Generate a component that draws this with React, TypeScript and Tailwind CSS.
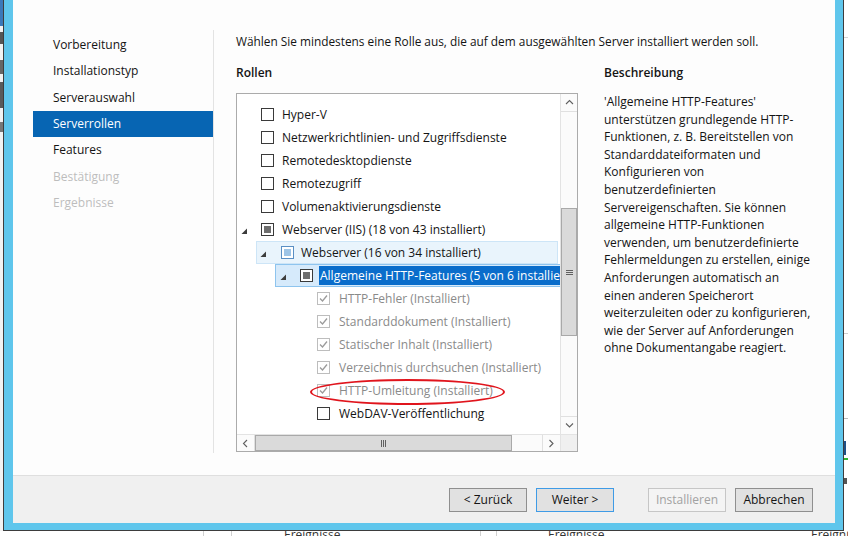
import React from "react";

// Server-Manager "Rollen und Features hinzufügen" wizard, step "Serverrollen".

const navItems = [
  { label: "Vorbereitung", state: "done" },
  { label: "Installationstyp", state: "done" },
  { label: "Serverauswahl", state: "done" },
  { label: "Serverrollen", state: "active" },
  { label: "Features", state: "done" },
  { label: "Bestätigung", state: "off" },
  { label: "Ergebnisse", state: "off" },
];

const description = [
  "'Allgemeine HTTP-Features'",
  "unterstützen grundlegende HTTP-",
  "Funktionen, z. B. Bereitstellen von",
  "Standarddateiformaten und",
  "Konfigurieren von",
  "benutzerdefinierten",
  "Servereigenschaften. Sie können",
  "allgemeine HTTP-Funktionen",
  "verwenden, um benutzerdefinierte",
  "Fehlermeldungen zu erstellen, einige",
  "Anforderungen automatisch an",
  "einen anderen Speicherort",
  "weiterzuleiten oder zu konfigurieren,",
  "wie der Server auf Anforderungen",
  "ohne Dokumentangabe reagiert.",
];

const topRoles = [
  "Hyper-V",
  "Netzwerkrichtlinien- und Zugriffsdienste",
  "Remotedesktopdienste",
  "Remotezugriff",
  "Volumenaktivierungsdienste",
];

const installed = [
  "HTTP-Fehler (Installiert)",
  "Standarddokument (Installiert)",
  "Statischer Inhalt (Installiert)",
  "Verzeichnis durchsuchen (Installiert)",
  "HTTP-Umleitung (Installiert)",
];

function Expander() {
  return (
    <svg width="7" height="7" viewBox="0 0 7 7" className="mt-[3px] shrink-0">
      <polygon points="6,0.5 6,6 0.5,6" fill="#3c3c3c" />
    </svg>
  );
}

function Box({ kind }: { kind: "empty" | "partial" | "partialBlue" | "checkedOff" }) {
  if (kind === "checkedOff") {
    return (
      <span className="flex h-[13px] w-[13px] shrink-0 items-center justify-center border border-[#bdbdbd] bg-white">
        <svg width="11" height="11" viewBox="0 0 11 11">
          <polyline points="2,5.5 4.5,8 9,2.5" fill="none" stroke="#9b9b9b" strokeWidth="1.3" />
        </svg>
      </span>
    );
  }
  if (kind === "partial") {
    return (
      <span className="flex h-[13px] w-[13px] shrink-0 items-center justify-center border border-[#3a3a3a] bg-white">
        <span className="h-[7px] w-[7px] bg-[#6e6e6e]" />
      </span>
    );
  }
  if (kind === "partialBlue") {
    return (
      <span className="flex h-[13px] w-[13px] shrink-0 items-center justify-center border border-[#5a8fc4] bg-white">
        <span className="h-[7px] w-[7px] bg-[#9dc4e6]" />
      </span>
    );
  }
  return <span className="h-[13px] w-[13px] shrink-0 border border-[#3a3a3a] bg-white" />;
}

function Chevron({ dir }: { dir: "up" | "down" | "left" | "right" }) {
  const pts = {
    up: "1,5 4.5,1.5 8,5",
    down: "1,1.5 4.5,5 8,1.5",
    left: "5,1 1.5,4.5 5,8",
    right: "1.5,1 5,4.5 1.5,8",
  }[dir];
  const vertical = dir === "up" || dir === "down";
  return (
    <svg width={vertical ? 9 : 7} height={vertical ? 7 : 9} viewBox={vertical ? "0 0 9 7" : "0 0 7 9"}>
      <polyline points={pts} fill="none" stroke="#606060" strokeWidth="1.1" />
    </svg>
  );
}

function RoleTree() {
  return (
    <div className="flex h-[359px] w-[342px] flex-col border border-[#ababab] bg-white">
      <div className="flex h-[340px]">
        <div className="relative w-[323px] overflow-hidden pt-[9px] whitespace-nowrap">
          {topRoles.map((r) => (
            <div key={r} className="flex h-[23px] items-center pl-[24px]">
              <Box kind="empty" />
              <span className="ml-[8px]">{r}</span>
            </div>
          ))}
          <div className="flex h-[23px] items-center pl-[4px]">
            <Expander />
            <span className="ml-[13px] flex">
              <Box kind="partial" />
            </span>
            <span className="ml-[8px]">Webserver (IIS) (18 von 43 installiert)</span>
          </div>
          <div className="ml-[19px] flex h-[23px] w-[302px] items-center border border-[#cde5f7] bg-[#e9f4fc] pl-[3px]">
            <Expander />
            <span className="ml-[14px] flex">
              <Box kind="partialBlue" />
            </span>
            <span className="ml-[7px]">Webserver (16 von 34 installiert)</span>
          </div>
          <div className="ml-[38px] flex h-[23px] w-[320px] items-center border border-[#8ec4ee] bg-[#d6eafb] pl-[4px]">
            <Expander />
            <span className="ml-[13px] flex">
              <Box kind="partial" />
            </span>
            <span className="ml-[6px] bg-[#0a6dcb] px-[1px] leading-[19px] text-white">
              Allgemeine HTTP-Features (5 von 6 installiert)
            </span>
          </div>
          {installed.map((r) => (
            <div key={r} className="flex h-[23px] items-center pl-[80px]">
              <Box kind="checkedOff" />
              <span className="ml-[9px] text-[#8a8a8a]">{r}</span>
            </div>
          ))}
          <div className="flex h-[23px] items-center pl-[80px]">
            <Box kind="empty" />
            <span className="ml-[9px]">WebDAV-Veröffentlichung</span>
          </div>
          <div className="absolute left-[73px] top-[285px] h-[26px] w-[195px] rounded-[50%] border-2 border-[#e0141c]" />
        </div>
        {/* vertical scrollbar */}
        <div className="flex w-[17px] flex-col border-l border-[#e3e3e3] bg-[#fbfbfb]">
          <div className="flex h-[18px] items-center justify-center border-b border-[#e0e0e0]">
            <Chevron dir="up" />
          </div>
          <div className="h-[96px]" />
          <div className="flex h-[128px] items-center justify-center border border-[#a9a9a9] bg-[#dadada]">
            <div className="flex flex-col gap-[1px]">
              <span className="h-[1px] w-[7px] bg-[#606060]" />
              <span className="h-[1px] w-[7px] bg-[#606060]" />
              <span className="h-[1px] w-[7px] bg-[#606060]" />
            </div>
          </div>
          <div className="flex-1" />
          <div className="flex h-[18px] items-center justify-center border-t border-[#e0e0e0]">
            <Chevron dir="down" />
          </div>
        </div>
      </div>
      {/* horizontal scrollbar */}
      <div className="flex h-[17px] border-t border-[#e3e3e3] bg-[#fbfbfb]">
        <div className="flex w-[18px] items-center justify-center border-r border-[#e0e0e0]">
          <Chevron dir="left" />
        </div>
        <div className="flex w-[257px] items-center justify-center border border-[#a9a9a9] bg-[#dadada]">
          <div className="flex gap-[1px]">
            <span className="h-[7px] w-[1px] bg-[#606060]" />
            <span className="h-[7px] w-[1px] bg-[#606060]" />
            <span className="h-[7px] w-[1px] bg-[#606060]" />
          </div>
        </div>
        <div className="flex-1" />
        <div className="flex w-[18px] items-center justify-center border-l border-[#e0e0e0]">
          <Chevron dir="right" />
        </div>
        <div className="w-[17px] border-l border-[#e3e3e3] bg-[#f0f0f0]" />
      </div>
    </div>
  );
}

function WizardButton({ children, variant }: { children: React.ReactNode; variant: "normal" | "default" | "disabled" }) {
  const styles = {
    normal: "border-[#8f8f8f] bg-[#e1e1e1] text-[#141414]",
    default: "border-[#3f9be6] bg-[#e1e1e1] text-[#141414]",
    disabled: "border-[#c6c6c6] bg-[#f4f4f4] text-[#a2a2a2]",
  }[variant];
  return (
    <button className={`flex h-[24px] w-[78px] items-center justify-center border text-[12px] ${styles}`}>
      {children}
    </button>
  );
}

export default function App() {
  return (
    <div className="flex h-[536px] w-[848px] flex-col overflow-hidden bg-white font-['Open_Sans',sans-serif] text-[12px] text-[#141414]">
      <div className="flex h-[531px]">
        {/* desktop behind, left */}
        <div className="flex w-[3px] flex-col bg-[#f2f2f2]">
          <div className="h-[26px] bg-[#3b78b8]" />
          <div className="h-[6px]" />
          <div className="h-[12px] bg-[#555]" />
          <div className="h-[16px]" />
          <div className="h-[14px] bg-[#666]" />
          <div className="h-[8px]" />
          <div className="h-[26px] bg-[#5a5a5a]" />
          <div className="h-[14px]" />
          <div className="h-[10px] bg-[#777]" />
        </div>
        {/* window */}
        <div className="w-[841px] border-x border-b border-[#3d3d3d]">
          <div className="flex h-full flex-col border-b-[7px] border-l-[9px] border-r-[8px] border-[#5fc6ec]">
            <div className="flex h-[475px] bg-[#fdfdfd]">
              <div className="w-[201px]">
                <div className="ml-[20px] mt-[30px] h-[423px] border-r border-[#e3e3e3] pt-[2px]">
                  {navItems.map((n) => (
                    <div
                      key={n.label}
                      className={`flex h-[26.3px] items-center pl-[20px] ${
                        n.state === "active"
                          ? "bg-[#0765b3] text-white"
                          : n.state === "off"
                          ? "text-[#bdbdbd]"
                          : "text-[#141414]"
                      }`}
                    >
                      {n.label}
                    </div>
                  ))}
                </div>
              </div>
              <div className="flex-1 pl-[22px]">
                <div className="mt-[33px] h-[16px] text-[11.85px] leading-[16px]">
                  Wählen Sie mindestens eine Rolle aus, die auf dem ausgewählten Server installiert werden soll.
                </div>
                <div className="mt-[16px] grid grid-cols-[342px_1fr] gap-x-[26px]">
                  <div className="h-[16px] font-semibold leading-[16px]">Rollen</div>
                  <div className="h-[16px] font-semibold leading-[16px]">Beschreibung</div>
                  <div className="mt-[12px]">
                    <RoleTree />
                  </div>
                  <div className="mt-[12px] leading-[17.6px] whitespace-nowrap">
                    {description.map((l) => (
                      <div key={l}>{l}</div>
                    ))}
                  </div>
                </div>
              </div>
            </div>
            <div className="flex flex-1 justify-end border-t border-[#dfdfdf] bg-[#f0f0f0] pr-[22px] pt-[12px]">
              <WizardButton variant="normal">&lt; Zurück</WizardButton>
              <span className="w-[9px]" />
              <WizardButton variant="default">Weiter &gt;</WizardButton>
              <span className="w-[34px]" />
              <WizardButton variant="disabled">Installieren</WizardButton>
              <span className="w-[9px]" />
              <WizardButton variant="normal">Abbrechen</WizardButton>
            </div>
          </div>
        </div>
        {/* desktop behind, right */}
        <div className="flex w-[4px] flex-col bg-white">
          <div className="h-[37px]" />
          <div className="h-[1px] bg-[#d4d4d4]" />
          <div className="h-[295px]" />
          <div className="h-[1px] bg-[#cfcfcf]" />
          <div className="h-[84px]" />
          <div className="h-[1px] bg-[#bcbcbc]" />
          <div className="h-[22px]" />
          <div className="h-[14px] w-[2px] bg-[#1e4f86]" />
          <div className="h-[3px]" />
          <div className="h-[2px] bg-[#2fb52f]" />
          <div className="h-[18px]" />
          <div className="h-[6px] w-[3px] bg-[#555]" />
        </div>
      </div>
      {/* desktop behind, bottom */}
      <div className="flex h-[5px] overflow-hidden text-[12px] leading-[16px] text-[#333]">
        <div className="w-[203px] shrink-0" />
        <div className="w-[29px] shrink-0 border-x border-[#d0d0d0]" />
        <div className="w-[248px] shrink-0">
          <div className="-mt-[4px] pl-[52px]">Ereignisse</div>
        </div>
        <div className="w-[17px] shrink-0 border-x border-[#d0d0d0]" />
        <div className="w-[314px] shrink-0">
          <div className="-mt-[4px] pl-[51px]">Ereignisse</div>
        </div>
        <div className="flex-1">
          <div className="-mt-[4px] whitespace-nowrap">Ereignisse</div>
        </div>
      </div>
    </div>
  );
}
